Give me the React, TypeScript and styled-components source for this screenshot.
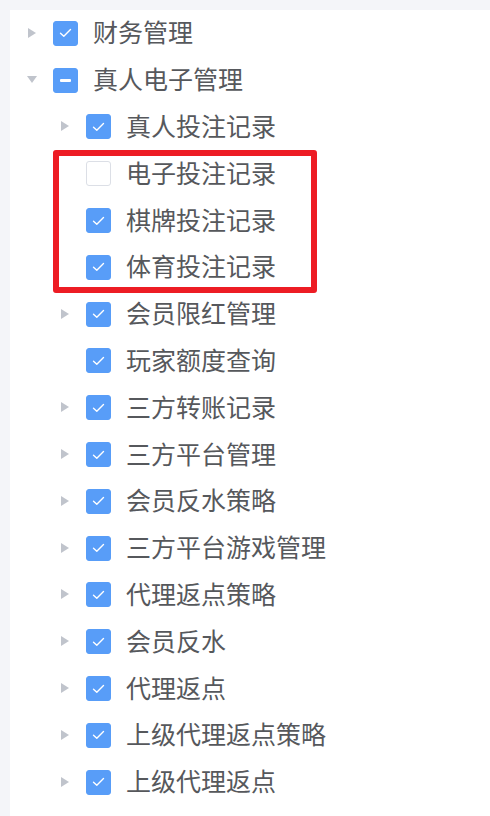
import React from "react";
import styled, { createGlobalStyle } from "styled-components";

const GlobalStyle = createGlobalStyle`
  html, body {
    margin: 0;
    padding: 0;
    background: #f4f5f9;
    overflow: hidden;
  }
  body {
    font-family: "Noto Sans CJK SC", "Noto Sans", sans-serif;
  }
`;

const Panel = styled.div`
  margin: 10px 0 0 10px;
  background: #ffffff;
  min-height: 820px;
`;

const Row = styled.div<{ $level: number }>`
  height: 46.8px;
  display: flex;
  align-items: center;
  padding-left: ${(p) => (p.$level - 1) * 33}px;
  box-sizing: border-box;
`;

const Caret = styled.span<{ $mode: "none" | "right" | "down" }>`
  width: 43px;
  height: 100%;
  display: flex;
  align-items: center;
  justify-content: center;
  flex-shrink: 0;

  &::before {
    content: "";
    display: ${(p) => (p.$mode === "none" ? "none" : "block")};
    width: 0;
    height: 0;
    ${(p) =>
      p.$mode === "down"
        ? `border-left: 5.5px solid transparent;
           border-right: 5.5px solid transparent;
           border-top: 7px solid #c0c4cc;
           margin-top: -2px;`
        : `border-top: 5.5px solid transparent;
           border-bottom: 5.5px solid transparent;
           border-left: 8px solid #c0c4cc;
           margin-left: 1px;
           margin-top: -1px;`}
  }
`;

const Box = styled.span<{ $state: "on" | "off" | "half" }>`
  width: 25px;
  height: 25px;
  box-sizing: border-box;
  border-radius: 3px;
  flex-shrink: 0;
  margin-right: 15px;
  display: flex;
  align-items: center;
  justify-content: center;
  background: ${(p) => (p.$state === "off" ? "#ffffff" : "#589df8")};
  border: 1.5px solid ${(p) => (p.$state === "off" ? "#dcdfe6" : "#589df8")};
`;

const HalfBar = styled.span`
  width: 11px;
  height: 3px;
  background: #ffffff;
  border-radius: 1px;
`;

const Label = styled.span`
  font-size: 25px;
  color: #56585c;
  line-height: 1;
  white-space: nowrap;
  margin-top: -3px;
`;

const Marked = styled.div`
  position: relative;
`;

const RedFrame = styled.div`
  position: absolute;
  left: 43px;
  top: 0;
  width: 264px;
  height: 143px;
  box-sizing: border-box;
  border: 6px solid #ed1c24;
  border-radius: 3px;
  pointer-events: none;
`;

type Node = {
  label: string;
  level: number;
  caret: "none" | "right" | "down";
  state: "on" | "off" | "half";
};

const Check = () => (
  <svg width="13" height="10" viewBox="0 0 13 10">
    <path d="M1.5 5.2 L4.8 8.3 L11.5 1.6" fill="none" stroke="#fff" strokeWidth="1.4" strokeLinecap="round" strokeLinejoin="round" />
  </svg>
);

const TreeRow = ({ node }: { node: Node }) => (
  <Row $level={node.level}>
    <Caret $mode={node.caret} />
    <Box $state={node.state}>
      {node.state === "on" && <Check />}
      {node.state === "half" && <HalfBar />}
    </Box>
    <Label>{node.label}</Label>
  </Row>
);

const top: Node[] = [
  { label: "财务管理", level: 1, caret: "right", state: "on" },
  { label: "真人电子管理", level: 1, caret: "down", state: "half" },
  { label: "真人投注记录", level: 2, caret: "right", state: "on" },
];

const marked: Node[] = [
  { label: "电子投注记录", level: 2, caret: "none", state: "off" },
  { label: "棋牌投注记录", level: 2, caret: "none", state: "on" },
  { label: "体育投注记录", level: 2, caret: "none", state: "on" },
];

const rest: Node[] = [
  { label: "会员限红管理", level: 2, caret: "right", state: "on" },
  { label: "玩家额度查询", level: 2, caret: "none", state: "on" },
  { label: "三方转账记录", level: 2, caret: "right", state: "on" },
  { label: "三方平台管理", level: 2, caret: "right", state: "on" },
  { label: "会员反水策略", level: 2, caret: "right", state: "on" },
  { label: "三方平台游戏管理", level: 2, caret: "right", state: "on" },
  { label: "代理返点策略", level: 2, caret: "right", state: "on" },
  { label: "会员反水", level: 2, caret: "right", state: "on" },
  { label: "代理返点", level: 2, caret: "right", state: "on" },
  { label: "上级代理返点策略", level: 2, caret: "right", state: "on" },
  { label: "上级代理返点", level: 2, caret: "right", state: "on" },
  { label: "代理管理", level: 1, caret: "right", state: "on" },
];

export default function App() {
  return (
    <>
      <GlobalStyle />
      <Panel>
        {top.map((n) => (
          <TreeRow key={n.label} node={n} />
        ))}
        <Marked>
          {marked.map((n) => (
            <TreeRow key={n.label} node={n} />
          ))}
          <RedFrame />
        </Marked>
        {rest.map((n) => (
          <TreeRow key={n.label} node={n} />
        ))}
      </Panel>
    </>
  );
}
